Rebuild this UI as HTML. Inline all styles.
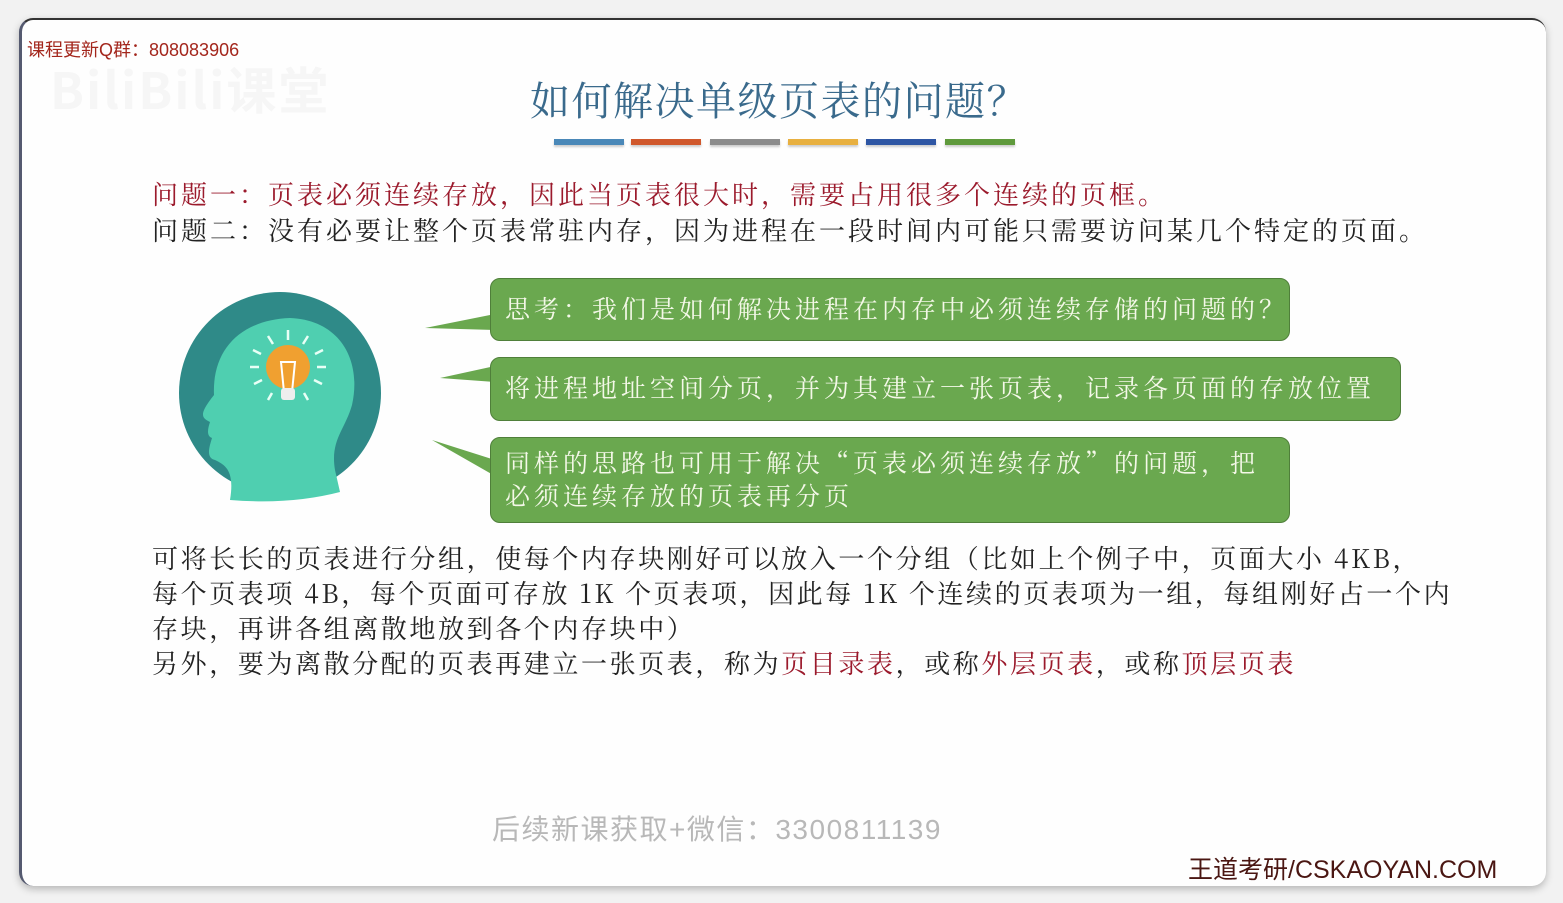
<!DOCTYPE html>
<html><head><meta charset="utf-8"><style>
*{margin:0;padding:0;box-sizing:border-box}
body{width:1563px;height:903px;background:#f2f2f2;position:relative;overflow:hidden;font-family:"Noto Serif CJK SC","Liberation Serif",serif}
.slide{position:absolute;left:19px;top:18px;width:1527px;height:868px;background:#fefefe;border-radius:14px;border-top:2px solid #333;border-left:3px solid #555a70;box-shadow:0 3px 8px rgba(0,0,0,.25)}
.a{position:absolute;white-space:nowrap}
.t{font-size:26px;color:#222;letter-spacing:3px;line-height:35px}
.r{color:#9b1a2c}
.b{position:absolute;background:#6aa84f;border:1.5px solid #4f7f3a;border-radius:10px;color:#f4f8e8;font-size:25px;padding-left:14px;letter-spacing:4px}
.bar{position:absolute;top:139px;height:6px;width:70px;box-shadow:0 2px 2px rgba(0,0,0,.2)}
</style></head><body>
<div class="slide"></div>
<div class="a" style="left:27px;top:36px;font-family:'Liberation Sans','Noto Sans CJK SC',sans-serif;font-size:18px;color:#a3261c">课程更新Q群：808083906</div>
<div class="a" style="left:50px;top:52px;font-family:'Noto Sans CJK SC',sans-serif;font-size:50px;font-weight:bold;color:#f6f6f6;letter-spacing:2px">BiliBili课堂</div>
<div class="a" style="left:530px;top:70px;font-size:40px;line-height:58px;color:#3a6a8c;letter-spacing:1.5px">如何解决单级页表的问题？</div>
<div class="bar" style="left:554px;background:#4a88b8"></div>
<div class="bar" style="left:631px;background:#d0582c"></div>
<div class="bar" style="left:710px;background:#8c8c8c"></div>
<div class="bar" style="left:788px;background:#e8b040"></div>
<div class="bar" style="left:866px;background:#2e56a4"></div>
<div class="bar" style="left:945px;background:#5f9a3c"></div>
<div class="a t r" style="left:152px;top:176px">问题一：页表必须连续存放，因此当页表很大时，需要占用很多个连续的页框。</div>
<div class="a t" style="left:152px;top:212px">问题二：没有必要让整个页表常驻内存，因为进程在一段时间内可能只需要访问某几个特定的页面。</div>
<svg class="a" style="left:170px;top:280px" width="330" height="250" viewBox="170 280 330 250">
<circle cx="280" cy="393" r="101" fill="#2f8a88"/>
<path d="M230 500 C235 470 225 465 215 460 C205 458 210 445 212 438 C206 436 208 428 210 422 C202 418 198 415 214 395 C212 350 240 320 290 318 C340 320 362 360 352 405 C345 430 330 440 335 470 L340 492 Q290 505 230 500Z" fill="#4fcfb0"/>
<circle cx="288" cy="367" r="22" fill="#f0a030"/>
<path d="M281 362 L284 392 L292 392 L295 362Z" fill="none" stroke="#fff" stroke-width="2"/>
<rect x="281" y="388" width="14" height="12" rx="3" fill="#eee"/>
<g stroke="#e8fff6" stroke-width="2.5"><line x1="288" y1="330" x2="288" y2="340"/><line x1="268" y1="336" x2="273" y2="344"/><line x1="308" y1="336" x2="303" y2="344"/><line x1="253" y1="350" x2="261" y2="354"/><line x1="323" y1="350" x2="315" y2="354"/><line x1="250" y1="367" x2="259" y2="367"/><line x1="326" y1="367" x2="317" y2="367"/><line x1="254" y1="384" x2="262" y2="380"/><line x1="322" y1="384" x2="314" y2="380"/><line x1="268" y1="400" x2="272" y2="393"/><line x1="308" y1="400" x2="304" y2="393"/></g>
<polygon points="425,328 495,314 495,330" fill="#6aa84f"/>
<polygon points="440,378 495,366 495,382" fill="#6aa84f"/>
<polygon points="432,440 495,460 495,476" fill="#6aa84f"/>
</svg>
<div class="b" style="left:490px;top:278px;width:800px;height:63px;line-height:58px">思考：我们是如何解决进程在内存中必须连续存储的问题的？</div>
<div class="b" style="left:490px;top:357px;width:911px;height:64px;line-height:58px">将进程地址空间分页，并为其建立一张页表，记录各页面的存放位置</div>
<div class="b" style="left:490px;top:437px;width:800px;height:86px;line-height:33px;padding-top:8px">同样的思路也可用于解决“页表必须连续存放”的问题，把<br>必须连续存放的页表再分页</div>
<div class="a t" style="left:152px;top:540px;letter-spacing:2.6px">可将长长的页表进行分组，使每个内存块刚好可以放入一个分组（比如上个例子中，页面大小 4KB，<br>每个页表项 4B，每个页面可存放 1K 个页表项，因此每 1K 个连续的页表项为一组，每组刚好占一个内<br>存块，再讲各组离散地放到各个内存块中）<br>另外，要为离散分配的页表再建立一张页表，称为<span class="r">页目录表</span>，或称<span class="r">外层页表</span>，或称<span class="r">顶层页表</span></div>
<div class="a" style="left:492px;top:808px;font-family:'Liberation Sans','Noto Sans CJK SC',sans-serif;font-size:28px;color:#b8b8b8;letter-spacing:1.5px">后续新课获取+微信：3300811139</div>
<div class="a" style="left:1188px;top:850px;font-family:'Liberation Sans','Noto Sans CJK SC',sans-serif;font-size:25px;color:#4a1612">王道考研/CSKAOYAN.COM</div>
</body></html>
